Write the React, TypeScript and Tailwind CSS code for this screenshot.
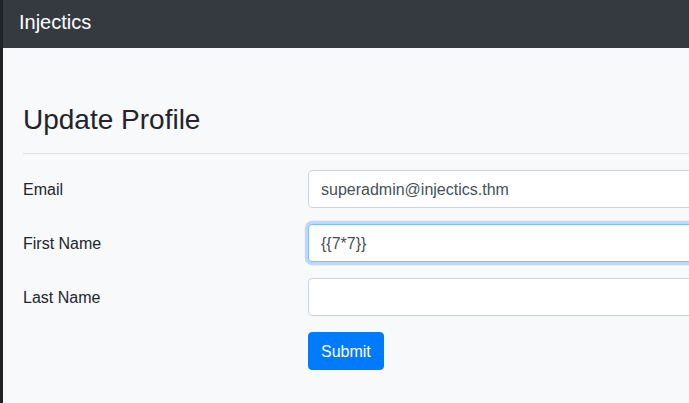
import { useState } from 'react';

const fields = [
  { id: 'email', label: 'Email', value: 'superadmin@injectics.thm', focused: false },
  { id: 'fname', label: 'First Name', value: '{{7*7}}', focused: true },
  { id: 'lname', label: 'Last Name', value: '', focused: false },
];

export default function App() {
  const [values, setValues] = useState<Record<string, string>>(
    Object.fromEntries(fields.map(f => [f.id, f.value]))
  );

  return (
    <div className="h-screen w-full overflow-hidden flex bg-[#f8f9fa] font-['Liberation_Sans',Arial,sans-serif]">
      {/* dark edge of the window */}
      <div className="w-[3px] shrink-0 bg-[#1f2226]" />

      <div className="flex-1 min-w-0 flex flex-col">
        {/* Navbar */}
        <nav className="h-[48px] shrink-0 bg-[#343a40] flex items-center pl-4">
          <span className="text-white text-[20px] leading-none -mt-[5px]">Injectics</span>
        </nav>

        {/* Update profile */}
        <div className="pl-5 pt-[55px]">
          <h3 className="text-[28px] leading-[1.2] text-[#212529] font-normal">Update Profile</h3>
          <hr className="mt-[16px] mb-4 border-0 border-t border-[#dfe0e1] w-[900px]" />

          <form className="flex flex-col gap-4" onSubmit={e => e.preventDefault()}>
            {fields.map(f => (
              <div key={f.id} className="flex items-center h-[38px]">
                <label htmlFor={f.id} className="w-[285px] shrink-0 text-base leading-6 text-[#212529] mt-[2px]">
                  {f.label}
                </label>
                <input
                  id={f.id}
                  type="text"
                  value={values[f.id]}
                  onChange={e => setValues(v => ({ ...v, [f.id]: e.target.value }))}
                  className={`w-[500px] shrink-0 h-[38px] px-3 pt-[2px] rounded bg-white text-base text-[#495057] outline-none border ${
                    f.focused
                      ? 'border-[#80bdff] shadow-[0_0_0_3.2px_rgba(0,123,255,0.25)]'
                      : 'border-[#ced4da]'
                  }`}
                />
              </div>
            ))}
            <div className="pl-[285px]">
              <button
                type="submit"
                className="h-[38px] px-3 pt-[2px] rounded border border-[#007bff] bg-[#007bff] text-white text-base leading-6"
              >
                Submit
              </button>
            </div>
          </form>
        </div>
      </div>
    </div>
  );
}
